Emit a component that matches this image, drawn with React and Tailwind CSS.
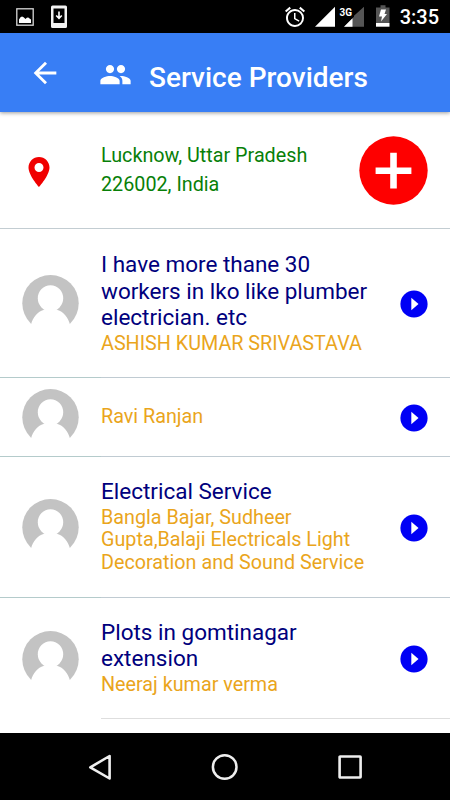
import React from 'react';
import { MdArrowBack, MdPeople, MdAlarm } from 'react-icons/md';

const providers = [
  {
    id: 1,
    lines: ['I have more thane 30', 'workers in lko like plumber', 'electrician. etc'],
    names: ['ASHISH KUMAR SRIVASTAVA'],
    size: 'h-[148px] pt-[22px]',
  },
  { id: 2, lines: [], names: ['Ravi Ranjan'], size: 'h-[78px] pt-[25.500px]' },
  {
    id: 3,
    lines: ['Electrical Service'],
    names: ['Bangla Bajar, Sudheer', 'Gupta,Balaji Electricals Light', 'Decoration and Sound Service'],
    size: 'h-[140px] pt-[21px]',
  },
  {
    id: 4,
    lines: ['Plots in gomtinagar', 'extension'],
    names: ['Neeraj kumar verma'],
    size: 'h-[120px] pt-[20.500px]',
    last: true,
  },
];

const Avatar = () => (
  <svg viewBox="0 0 57 57" className="h-[57px] w-[57px] shrink-0">
    <circle cx="28.5" cy="28.3" r="28.2" fill="#c3c3c3" />
    <ellipse cx="28.5" cy="23.3" rx="12.7" ry="13" fill="#fff" />
    <path d="M9 49.5C11 42 16 36.500 21.500 35Q23.500 34 23 31H34Q33.500 34 35.500 35C41 36.500 46 42 48 49.500V57H9Z" fill="#fff" />
  </svg>
);

const GoIcon = () => (
  <svg viewBox="0 0 28 28" className="h-7 w-7">
    <circle cx="14" cy="14" r="13.6" fill="#0000f5" />
    <path d="M11.300 7.700L18.500 14L11.300 20.300Z" fill="#fff" />
  </svg>
);

const StatusBar = () => (
  <div className="flex h-[33px] shrink-0 items-start justify-between bg-black pl-4 pr-[11px] text-white">
    <div className="flex gap-[17px] pt-[5px]">
      <svg viewBox="0 0 18 18" className="mt-[3px] h-[18px] w-[18px]">
        <rect x="0.800" y="0.800" width="16.400" height="16.400" fill="none" stroke="#d8d8d8" strokeWidth="1.300" />
        <path d="M3 15V11.500Q4.500 8.500 6 8.500T9.500 11Q12 8.500 13.500 10.500L15 11.500V15Z" fill="#fff" />
      </svg>
      <svg viewBox="0 0 16 23" className="h-[23px] w-4">
        <path fillRule="evenodd" d="M1.500 0.500H14.500Q16 0.500 16 2V21.500Q16 23 14.500 23H1.500Q0 23 0 21.500V2Q0 0.500 1.500 0.500ZM2.500 3.500V18H13.500V3.500Z" fill="#f2f2f2" />
        <path d="M8 6.500V13M5.200 10.500L8 13.300L10.800 10.500" fill="none" stroke="#fff" strokeWidth="1.600" />
      </svg>
    </div>
    <div className="flex">
      <MdAlarm className="mt-[5px] h-6 w-6" />
      <svg viewBox="0 0 50 23" className="ml-2 mt-[5px] h-[23px] w-[50px]">
        <path d="M0 21.700L20 1.700V21.700Z" fill="#fff" />
        <path d="M29 21.700L39 11.700V10.700L49 1.700V21.700Z" fill="#555" />
        <path d="M29 21.700L37.500 13.200V21.700Z" fill="#fff" />
        <rect x="24" y="0" width="14.500" height="12" fill="#000" />
        <text x="24.500" y="10.500" fill="#fff" fontSize="11.500" fontWeight="700" fontFamily="Roboto, sans-serif" textLength="12.500" lengthAdjust="spacingAndGlyphs">3G</text>
      </svg>
      <svg viewBox="0 0 14 22" className="ml-[11px] mt-[5px] h-[22px] w-[14px]">
        <path d="M0 2.500H4.500V0.300H9.500V2.500H13.500V18H0Z" fill="#555" />
        <path d="M0 18H13.500V21.700H0Z" fill="#fff" />
        <path d="M5 4.500H10L8.500 9H11L5 16.500L6 11.500H3Z" fill="#fff" />
      </svg>
      <span className="ml-[10px] mt-[5px] text-[20px] font-medium leading-6">3:35</span>
    </div>
  </div>
);

const Header = () => (
  <header className="z-10 flex h-[79px] shrink-0 items-center bg-[#387ef5] pl-7 text-white shadow-[0_1px_4px_rgba(0,0,0,0.4)]">
    <MdArrowBack className="h-[34px] w-[34px]" />
    <MdPeople className="ml-[37px] mt-1 h-[33px] w-[33px]" />
    <h1 className="ml-[17px] mt-[11px] whitespace-nowrap text-[28px] font-medium leading-8">Service Providers</h1>
  </header>
);

const LocationRow = () => (
  <div className="flex h-[117px] shrink-0 border-b border-[#c3cdd2]">
    <svg viewBox="0 0 24 24" className="ml-[21px] mt-[42px] h-9 w-9">
      <path fillRule="evenodd" d="M12 2C8.130 2 5 5.130 5 9c0 5.250 7 13 7 13s7-7.750 7-13c0-3.870-3.130-7-7-7zM12 12a3 3 0 1 1 0-6a3 3 0 0 1 0 6z" fill="#f00000" />
    </svg>
    <p className="ml-[44px] mt-[29px] w-[258px] text-[19.750px] leading-[29px] text-[#087f08]">
      Lucknow, Uttar Pradesh
      <br />
      226002, India
    </p>
    <button className="mt-[24px] h-[69px] w-[69px]">
      <svg viewBox="0 0 69 69" className="h-[69px] w-[69px]">
        <circle cx="34.500" cy="34.500" r="34.200" fill="#fe0000" />
        <path d="M34.500 16.800V52.600M16.600 34.700H52.400" stroke="#fff" strokeWidth="6.600" />
      </svg>
    </button>
  </div>
);

const ProviderRow = ({ provider }) => (
  <div className="flex shrink-0">
    <div className={`flex w-[101px] items-center pl-[22px] ${provider.last ? 'pt-px' : 'border-b border-[#b4cbcb]'}`}>
      <Avatar />
    </div>
    <div className={`flex flex-1 border-b ${provider.last ? 'border-[#dedede]' : 'border-[#c0cbd2]'}`}>
      <div className={`w-[299px] whitespace-nowrap ${provider.size}`}>
        {provider.lines.map((line) => (
          <h2 key={line} className="text-[22.500px] leading-[26.600px] text-[#00007d]">{line}</h2>
        ))}
        <div className="pt-[2.200px]">
          {provider.names.map((name) => (
            <p key={name} className="text-[19.750px] leading-[22.500px] text-[#eaa51c]">{name}</p>
          ))}
        </div>
      </div>
      <button className="self-center pt-px">
        <GoIcon />
      </button>
    </div>
  </div>
);

const NavBar = () => (
  <nav className="flex h-[67px] shrink-0 items-center bg-black pl-[87px]">
    <svg viewBox="0 0 26 28" className="h-7 w-[26px]">
      <path d="M3.300 14.300L22.600 3V25.500Z" fill="none" stroke="#eee" strokeWidth="2.600" strokeLinejoin="round" />
    </svg>
    <svg viewBox="0 0 28 28" className="ml-[98px] h-7 w-7">
      <circle cx="13.700" cy="14" r="11.800" fill="none" stroke="#eee" strokeWidth="2.500" />
    </svg>
    <svg viewBox="0 0 26 28" className="ml-[98px] h-7 w-[26px]">
      <rect x="2.600" y="3.500" width="21" height="21" rx="0.500" fill="none" stroke="#eee" strokeWidth="2.600" />
    </svg>
  </nav>
);

export default function App() {
  return (
    <div className="flex h-[800px] w-[450px] flex-col overflow-hidden bg-white font-[Roboto,sans-serif]">
      <StatusBar />
      <Header />
      <main className="flex min-h-0 flex-1 flex-col">
        <LocationRow />
        {providers.map((provider) => (
          <ProviderRow key={provider.id} provider={provider} />
        ))}
      </main>
      <NavBar />
    </div>
  );
}
